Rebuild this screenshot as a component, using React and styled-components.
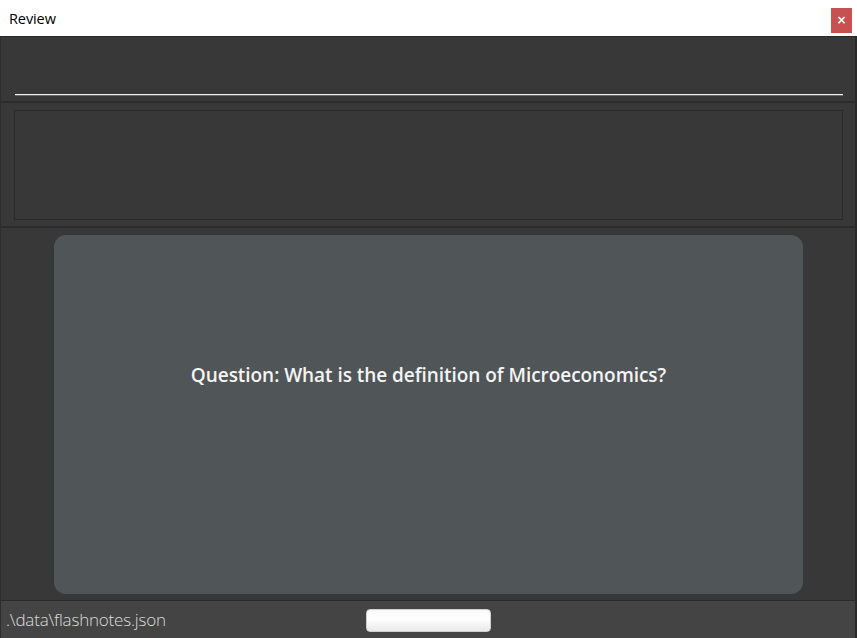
import React from "react";
import styled, { createGlobalStyle } from "styled-components";

const Global = createGlobalStyle`
  html, body { margin: 0; padding: 0; height: 100%; background: #ffffff; }
  #root { height: 100%; }
  * { box-sizing: border-box; }
`;

const Window = styled.div`
  width: 857px;
  height: 638px;
  display: flex;
  flex-direction: column;
  font-family: "Open Sans", "Noto Sans", sans-serif;
  overflow: hidden;
`;

const TitleBar = styled.div`
  height: 36px;
  background: #ffffff;
  display: flex;
  align-items: center;
  justify-content: space-between;
  padding: 0 5px 0 9px;
`;

const Title = styled.span`
  font-size: 14.5px;
  color: #000;
  letter-spacing: -0.1px;
`;

const CloseButton = styled.button`
  width: 21px;
  height: 25px;
  margin-top: 5px;
  border: none;
  background: #c75050;
  color: #fff;
  font-family: "DejaVu Sans", sans-serif;
  font-weight: bold;
  font-size: 12px;
  line-height: 1;
  padding: 0 0 1px 0;
  display: flex;
  align-items: center;
  justify-content: center;
`;

const Body = styled.div`
  flex: 1;
  display: flex;
  flex-direction: column;
  background: #383838;
  border-left: 1px solid #2e2e2e;
  border-right: 2px solid #2a2a2a;
  border-top: 1px solid #2a2a2a;
`;

const InputSection = styled.div`
  height: 66px;
  display: flex;
  align-items: flex-end;
  padding: 0 12px 5px 14px;
  border-bottom: 2px solid #2c2c2c;
`;

const Underline = styled.div`
  width: 100%;
  height: 2px;
  border-top: 1px solid #f2f2f2;
  border-bottom: 1px solid #6a6a6a;
`;

const ResultSection = styled.div`
  height: 125px;
  padding: 7px 12px 6px 13px;
  border-bottom: 2px solid #2c2c2c;
`;

const ResultBox = styled.div`
  height: 100%;
  border: 1px solid #2a2a2a;
`;

const CardSection = styled.div`
  flex: 1;
  padding: 7px 52px 6px 53px;
  display: flex;
  border-bottom: 1px solid #2a2a2a;
`;

const Card = styled.div`
  flex: 1;
  background: #505558;
  border-radius: 12px;
  display: flex;
  align-items: center;
  justify-content: center;
  padding-bottom: 80px;
`;

const Question = styled.div`
  color: #f4f4f4;
  font-size: 19px;
  font-weight: 600;
  letter-spacing: -0.05px;
`;

const StatusBar = styled.div`
  height: 37px;
  background: #444444;
  display: flex;
  align-items: center;
  padding-left: 5px;
`;

const Path = styled.span`
  color: #dcdcdc;
  font-size: 17px;
  font-weight: 300;
  width: 360px;
  letter-spacing: -0.2px;
`;

const StatusButton = styled.button`
  width: 125px;
  height: 23px;
  margin-top: 2px;
  border: 1px solid #cfcfcf;
  border-radius: 4px;
  background: linear-gradient(#f9f9f9, #ffffff 40%, #e9e9e9);
  padding: 0;
`;

export default function App() {
  return (
    <Window>
      <Global />
      <TitleBar>
        <Title>Review</Title>
        <CloseButton>×</CloseButton>
      </TitleBar>
      <Body>
        <InputSection>
          <Underline />
        </InputSection>
        <ResultSection>
          <ResultBox />
        </ResultSection>
        <CardSection>
          <Card>
            <Question>Question: What is the definition of Microeconomics?</Question>
          </Card>
        </CardSection>
        <StatusBar>
          <Path>.\data\flashnotes.json</Path>
          <StatusButton />
        </StatusBar>
      </Body>
    </Window>
  );
}
